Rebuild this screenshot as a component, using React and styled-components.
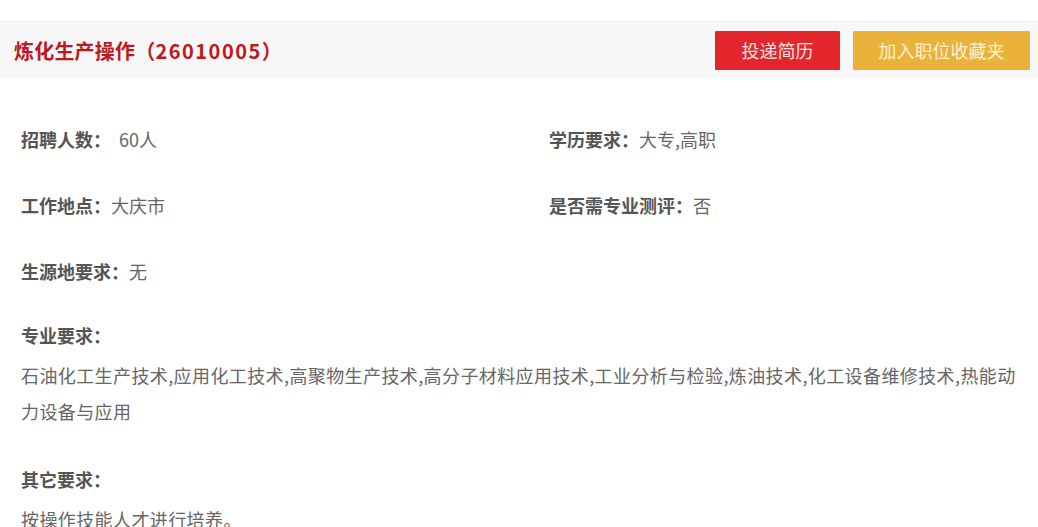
import styled, { createGlobalStyle } from "styled-components";

const GlobalStyle = createGlobalStyle`
  body {
    margin: 0;
    background: #fff;
    font-family: "Noto Sans CJK SC", "Noto Sans", sans-serif;
  }
`;

const Page = styled.div`
  width: 1038px;
  padding-top: 21px;
`;

const Header = styled.div`
  height: 56px;
  border-top: 1px solid #ececec;
  background: #f7f7f7;
  display: flex;
  align-items: center;
  justify-content: space-between;
  padding: 0 8px 0 14px;
`;

const Title = styled.h2`
  margin: 0;
  font-size: 20px;
  font-weight: 700;
  color: #c1171d;
  letter-spacing: 0.2px;
`;

const Code = styled.span`
  letter-spacing: 1.5px;
`;

const Actions = styled.div`
  display: flex;
  gap: 13px;
`;

const ActionButton = styled.button`
  height: 39px;
  width: ${(p) => p.$width}px;
  border: none;
  border-radius: 1px;
  background: ${(p) => p.$bg};
  color: ${(p) => p.$color};
  font-family: inherit;
  font-size: 18px;
  cursor: pointer;
  padding: 0;
`;

const Body = styled.div`
  padding: 28px 21px 0;
  color: #555;
  font-size: 18px;
`;

const InfoGrid = styled.div`
  display: grid;
  grid-template-columns: 528px 1fr;
  grid-auto-rows: 66px;
`;

const Item = styled.div`
  line-height: 66px;
`;

const Label = styled.span`
  font-weight: 700;
  color: #555;
`;

const Value = styled.span`
  color: #666;
  padding-left: ${(p) => p.$gap || 0}px;
`;

const Section = styled.div`
  margin-top: ${(p) => p.$top}px;
`;

const SectionTitle = styled.div`
  font-weight: 700;
  line-height: 36px;
  margin-bottom: 4px;
  color: #555;
`;

const SectionText = styled.div`
  line-height: 36px;
  color: #666;
  letter-spacing: 0.4px;
`;

const info = [
  ["招聘人数：", "60人", 8],
  ["学历要求：", "大专,高职"],
  ["工作地点：", "大庆市"],
  ["是否需专业测评：", "否"],
  ["生源地要求：", "无"],
];

export default function App() {
  return (
    <>
      <GlobalStyle />
      <Page>
        <Header>
          <Title>
            炼化生产操作（<Code>26010005</Code>）
          </Title>
          <Actions>
            <ActionButton $width={125} $bg="#e2262c" $color="#fbe3e2">
              投递简历
            </ActionButton>
            <ActionButton $width={177} $bg="#e9b23a" $color="#fcf0d2">
              加入职位收藏夹
            </ActionButton>
          </Actions>
        </Header>
        <Body>
          <InfoGrid>
            {info.map(([label, value, gap]) => (
              <Item key={label}>
                <Label>{label}</Label>
                <Value $gap={gap}>{value}</Value>
              </Item>
            ))}
          </InfoGrid>
          <Section $top={13}>
            <SectionTitle>专业要求：</SectionTitle>
            <SectionText>
              石油化工生产技术,应用化工技术,高聚物生产技术,高分子材料应用技术,工业分析与检验,炼油技术,化工设备维修技术,热能动力设备与应用
            </SectionText>
          </Section>
          <Section $top={32}>
            <SectionTitle>其它要求：</SectionTitle>
            <SectionText>按操作技能人才进行培养。</SectionText>
          </Section>
        </Body>
      </Page>
    </>
  );
}
